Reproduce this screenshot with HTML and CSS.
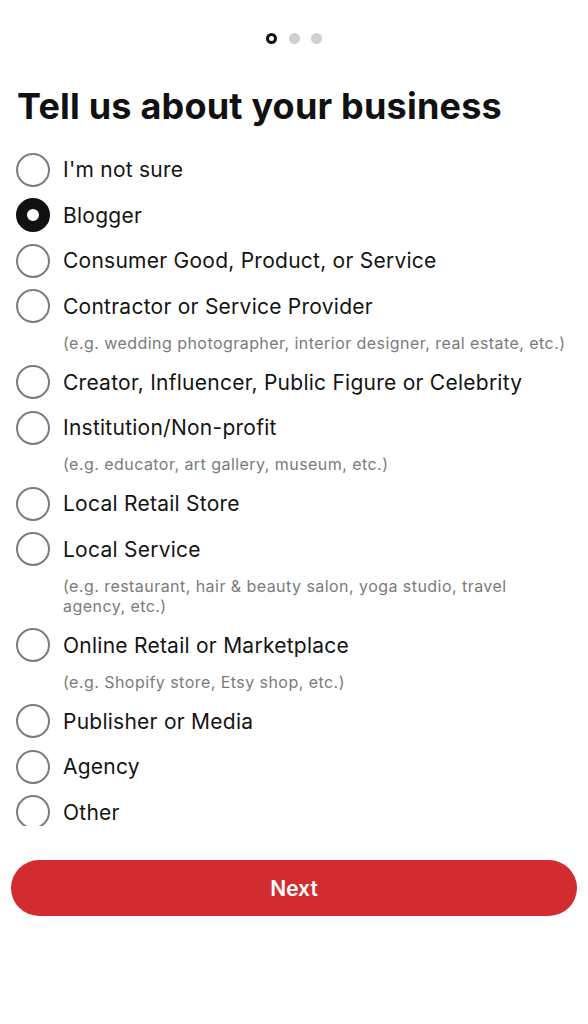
FILE: index.html
```html
<!DOCTYPE html>
<html lang="en">
<head>
<meta charset="utf-8">
<title>Tell us about your business</title>
<link rel="stylesheet" href="styles.css">
</head>
<body>
<div class="screen">
  <div class="dots">
    <span class="dot active"></span>
    <span class="dot"></span>
    <span class="dot"></span>
  </div>
  <h1 class="title">Tell us about your business</h1>
  <div class="options">
    <div class="option"><span class="radio"></span><span class="label">I'm not sure</span></div>
    <div class="option"><span class="radio checked"></span><span class="label">Blogger</span></div>
    <div class="option"><span class="radio"></span><span class="label">Consumer Good, Product, or Service</span></div>
    <div class="option"><span class="radio"></span><span class="label">Contractor or Service Provider</span></div>
    <div class="hint">(e.g. wedding photographer, interior designer, real estate, etc.)</div>
    <div class="option"><span class="radio"></span><span class="label">Creator, Influencer, Public Figure or Celebrity</span></div>
    <div class="option"><span class="radio"></span><span class="label">Institution/Non-profit</span></div>
    <div class="hint">(e.g. educator, art gallery, museum, etc.)</div>
    <div class="option"><span class="radio"></span><span class="label">Local Retail Store</span></div>
    <div class="option"><span class="radio"></span><span class="label">Local Service</span></div>
    <div class="hint">(e.g. restaurant, hair &amp; beauty salon, yoga studio, travel agency, etc.)</div>
    <div class="option"><span class="radio"></span><span class="label">Online Retail or Marketplace</span></div>
    <div class="hint">(e.g. Shopify store, Etsy shop, etc.)</div>
    <div class="option"><span class="radio"></span><span class="label">Publisher or Media</span></div>
    <div class="option"><span class="radio"></span><span class="label">Agency</span></div>
    <div class="option"><span class="radio"></span><span class="label">Other</span></div>
  </div>
  <button class="next">Next</button>
</div>
</body>
</html>
```
FILE: styles.css
```css
html, body {
  margin: 0;
  padding: 0;
  background: #ffffff;
}
body {
  font-family: Inter, "Liberation Sans", Arial, sans-serif;
  color: #111111;
}
.screen {
  width: 588px;
  height: 1024px;
  display: flex;
  flex-direction: column;
}
.dots {
  display: flex;
  justify-content: center;
  gap: 11.5px;
  padding-top: 33px;
  height: 11px;
}
.dot {
  width: 11px;
  height: 11px;
  border-radius: 50%;
  background: #d0d0d0;
  box-sizing: border-box;
}
.dot.active {
  background: #ffffff;
  border: 3px solid #111111;
}
.title {
  margin: 40px 0 0 17px;
  font-size: 36px;
  line-height: 44px;
  font-weight: 700;
  letter-spacing: 0.2px;
  color: #111111;
}
.options {
  margin-top: 19px;
  height: 679px;
  overflow: hidden;
  display: flex;
  flex-direction: column;
}
.option {
  height: 45.5px;
  flex: none;
  display: flex;
  align-items: center;
  padding-left: 16px;
}
.radio {
  width: 34px;
  height: 34px;
  box-sizing: border-box;
  border-radius: 50%;
  border: 2.5px solid #7c7c7c;
  background: #ffffff;
  flex: none;
}
.radio.checked {
  border: 11px solid #111111;
}
.label {
  margin-left: 13px;
  font-size: 21px;
  letter-spacing: 0.25px;
  color: #141414;
}
.hint {
  flex: none;
  padding: 3.5px 18px 7px 63px;
  font-size: 16px;
  line-height: 20px;
  letter-spacing: 0.45px;
  color: #7b7b7b;
}
.next {
  margin: 34px 11px 0 11px;
  height: 56px;
  border: none;
  border-radius: 28px;
  background: #d22b30;
  color: #ffffff;
  font-family: Inter, "Liberation Sans", Arial, sans-serif;
  font-size: 21px;
  font-weight: 600;
}
```
